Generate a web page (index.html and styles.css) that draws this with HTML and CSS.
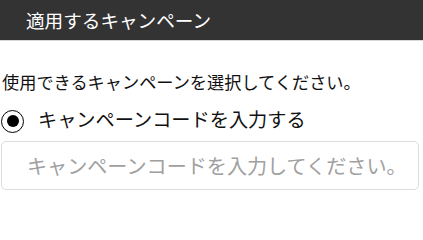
FILE: index.html
```html
<!DOCTYPE html>
<html lang="ja">
<head>
<meta charset="utf-8">
<link rel="stylesheet" href="styles.css">
</head>
<body>
<div class="header"><h1 class="title">適用するキャンペーン</h1></div>
<div class="content">
  <p class="desc">使用できるキャンペーンを選択してください。</p>
  <label class="option">
    <span class="radio"><span class="dot"></span></span>
    <span class="label">キャンペーンコードを入力する</span>
  </label>
  <input class="code" type="text" placeholder="キャンペーンコードを入力してください。">
</div>
</body>
</html>
```
FILE: styles.css
```css
html, body {
  margin: 0;
  padding: 0;
  background: #fff;
  font-family: "Noto Sans CJK JP", "Noto Sans", sans-serif;
  color: #111;
}
.header {
  height: 40px;
  background: #333;
  border-bottom: 1px solid #d8d8d8;
  display: flex;
  align-items: center;
  padding-left: 26px;
}
.title {
  margin: 0;
  font-size: 18.6px;
  font-weight: normal;
  color: #fff;
  line-height: 1;
}
.content {
  padding: 0 4px 0 1px;
}
.desc {
  margin: 0;
  padding-top: 29px;
  font-size: 17.2px;
  line-height: 24px;
  padding-left: 1px;
}
.option {
  display: flex;
  align-items: center;
  margin-top: 15px;
  height: 24px;
}
.radio {
  width: 23px;
  height: 23px;
  box-sizing: border-box;
  border: 1.5px solid #000;
  border-radius: 50%;
  display: flex;
  align-items: center;
  justify-content: center;
  background: #fff;
}
.dot {
  width: 12px;
  height: 12px;
  border-radius: 50%;
  background: #000;
}
.label {
  margin-left: 14px;
  font-size: 19.2px;
  line-height: 24px;
  position: relative;
  top: -2px;
}
.code {
  display: block;
  box-sizing: border-box;
  width: 100%;
  height: 49px;
  margin-top: 8px;
  border: 1px solid #dcdcdc;
  border-radius: 5px;
  padding: 0 0 0 25px;
  font-family: "Noto Sans CJK JP", "Noto Sans", sans-serif;
  font-size: 20.1px;
  color: #333;
  outline: none;
}
.code::placeholder {
  color: #a0a0a0;
}
```
